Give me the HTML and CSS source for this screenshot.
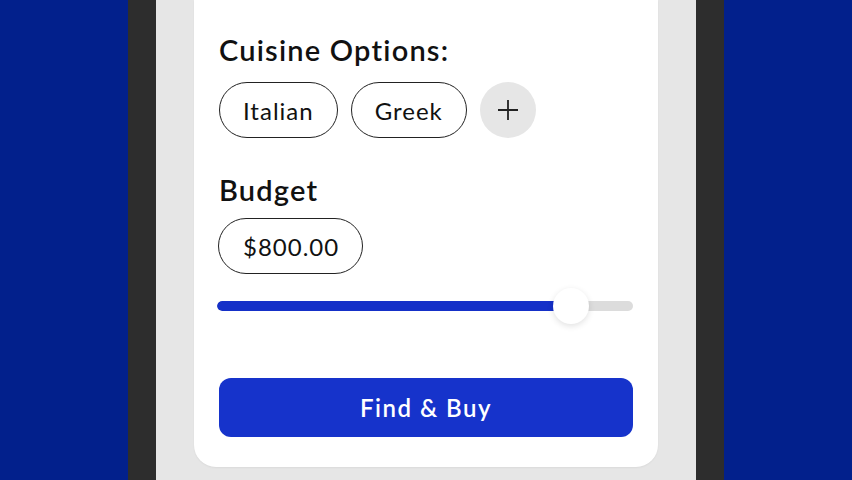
FILE: index.html
```html
<!DOCTYPE html>
<html>
<head>
<meta charset="utf-8">
<link rel="stylesheet" href="styles.css">
</head>
<body>
<div class="stage">
  <div class="device">
    <div class="screen">
      <div class="card">
        <h2 class="label">Cuisine Options:</h2>
        <div class="chips">
          <span class="chip">Italian</span>
          <span class="chip">Greek</span>
          <span class="add">
            <svg width="24" height="24" viewBox="0 0 24 24"><path d="M12 2V22M2 12H22" stroke="#222" stroke-width="1.8" fill="none"/></svg>
          </span>
        </div>
        <h2 class="label budget-label">Budget</h2>
        <div class="chips budget-chips">
          <span class="chip price">$800.00</span>
        </div>
        <div class="slider">
          <div class="track">
            <div class="fill" style="width: 85%"></div>
          </div>
          <div class="thumb" style="left: 85%"></div>
        </div>
        <button class="cta">Find &amp; Buy</button>
      </div>
    </div>
  </div>
</div>
</body>
</html>
```
FILE: styles.css
```css
html, body {
  margin: 0;
  padding: 0;
}
body {
  width: 852px;
  height: 480px;
  overflow: hidden;
  font-family: Lato, "Noto Sans", sans-serif;
  color: #111;
}
.stage {
  height: 480px;
  background: #02208c;
  display: flex;
  justify-content: center;
}
.device {
  width: 540px;
  background: #2d2d2d;
  padding: 0 28px;
  display: flex;
}
.screen {
  flex: 1;
  background: #e6e6e6;
  padding: 0 38px 13px;
  display: flex;
  flex-direction: column;
}
.card {
  flex: 1;
  background: #fff;
  border-radius: 0 0 22px 22px;
  padding: 32px 25px 0;
  display: flex;
  flex-direction: column;
  box-shadow: 0 1px 2px rgba(0,0,0,0.05);
}
.label {
  margin: 0;
  font-size: 29px;
  line-height: 36px;
  font-weight: 600;
  letter-spacing: 1.2px;
}
.budget-label {
  margin-top: 34px;
}
.chips {
  display: flex;
  gap: 13px;
  margin-top: 14px;
}
.budget-chips {
  margin-top: 10px;
}
.chip {
  height: 56px;
  box-sizing: border-box;
  border: 1.5px solid #222;
  border-radius: 28px;
  padding: 0 23px;
  display: flex;
  align-items: center;
  font-size: 24px;
  letter-spacing: 1px;
  color: #111;
}
.price {
  margin-left: -1px;
  padding: 0 23px 0 24px;
}
.add {
  width: 56px;
  height: 56px;
  border-radius: 50%;
  background: #e6e6e6;
  display: flex;
  align-items: center;
  justify-content: center;
}
.slider {
  position: relative;
  margin-top: 27px;
  margin-left: -2px;
  height: 10px;
}
.track {
  height: 10px;
  border-radius: 5px;
  background: #dcdcdc;
  overflow: hidden;
}
.fill {
  height: 100%;
  background: #1530c8;
  border-radius: 5px 0 0 5px;
}
.thumb {
  position: absolute;
  top: 50%;
  width: 36px;
  height: 36px;
  margin: -18px 0 0 -18px;
  border-radius: 50%;
  background: #fff;
  box-shadow: 0 2px 6px rgba(0,0,0,0.12);
}
.cta {
  margin-top: 67px;
  height: 59px;
  border: none;
  border-radius: 12px;
  background: #1633cb;
  color: #fff;
  font-family: Lato, "Noto Sans", sans-serif;
  font-size: 24px;
  font-weight: 600;
  letter-spacing: 1.5px;
  cursor: pointer;
}
```
